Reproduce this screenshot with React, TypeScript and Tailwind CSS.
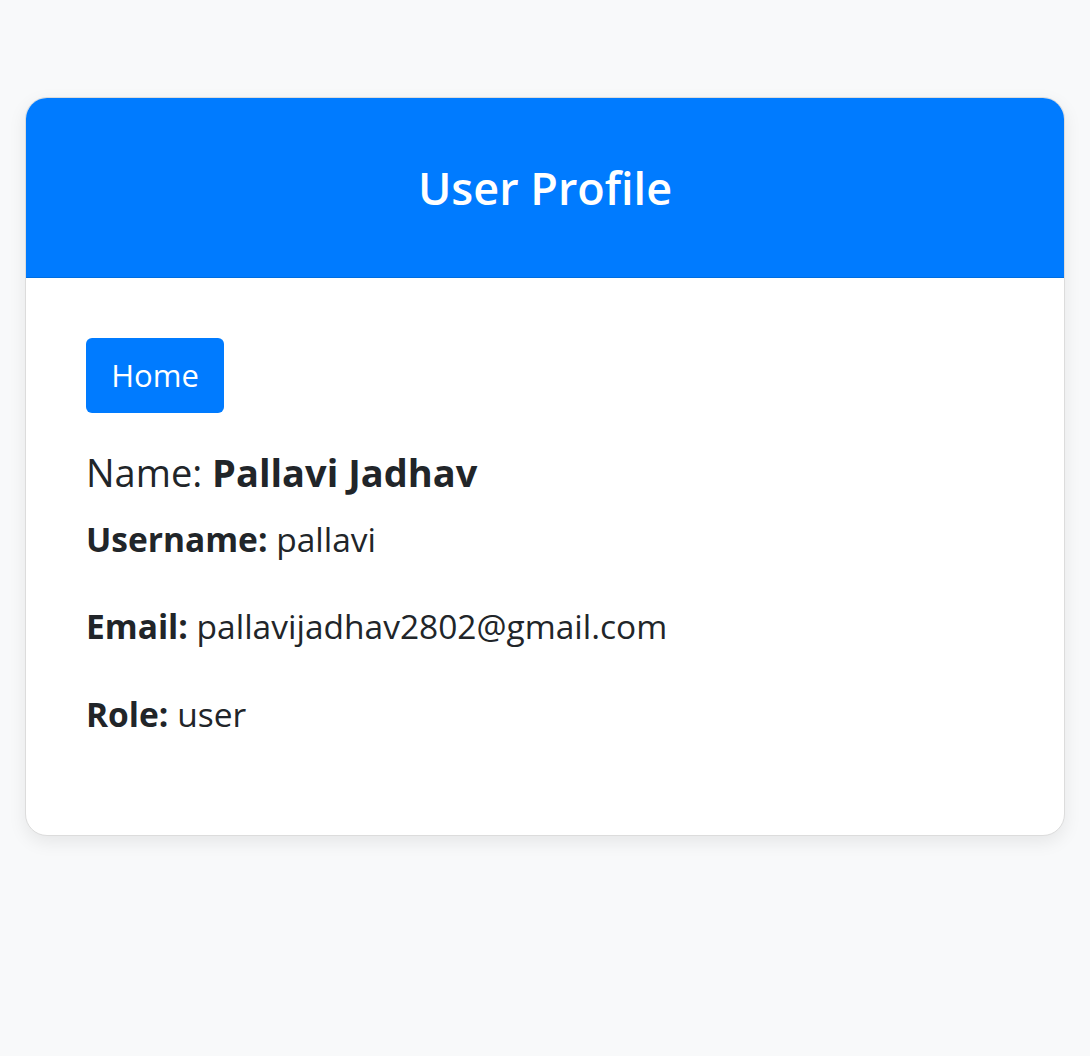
export default function App() {
  const font = { fontFamily: '"Open Sans", "Noto Sans", sans-serif' };

  return (
    <main
      className="min-h-[1056px] bg-[#f8f9fa] px-[25px] pt-[97px] text-[#212529]"
      style={font}
    >
      <div className="overflow-hidden rounded-[22px] border border-[#dcdcdc] bg-white shadow-[0_6px_18px_rgba(0,0,0,0.08)]">
        <div className="flex h-[180px] items-center justify-center border-b border-[#006ee0] bg-[#007bff]">
          <h1 className="text-[45px] font-semibold leading-none text-white">
            User Profile
          </h1>
        </div>

        <div className="px-[60px] pt-[60px] pb-[96px]">
          <button className="flex h-[75px] w-[138px] items-center justify-center rounded-[6px] bg-[#007bff] text-[31px] text-white">
            Home
          </button>

          <h3 className="mt-[37px] text-[38px] leading-[1.2]">
            Name: <span className="font-bold">Pallavi Jadhav</span>
          </h3>

          <div className="mt-[19px] space-y-[38px] text-[33.5px] leading-[1.48]">
            <p>
              <span className="font-bold">Username:</span> pallavi
            </p>
            <p>
              <span className="font-bold">Email:</span>{" "}
              pallavijadhav2802@gmail.com
            </p>
            <p>
              <span className="font-bold">Role:</span> user
            </p>
          </div>
        </div>
      </div>
    </main>
  );
}
